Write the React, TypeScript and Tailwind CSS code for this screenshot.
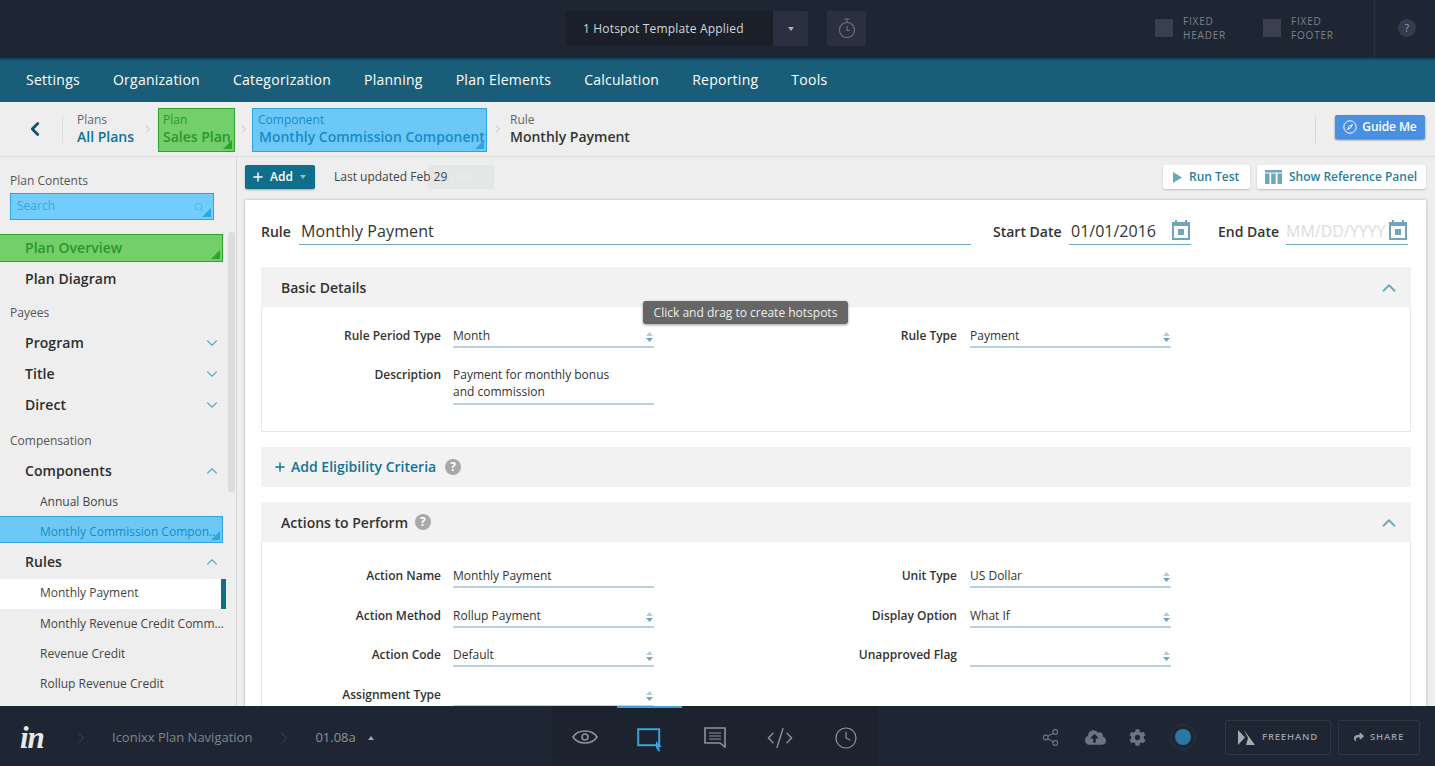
import React from "react";
import { ChevronDown, ChevronUp, ChevronLeft, ChevronRight, Plus, Search, Share2, CodeXml, Clock } from "lucide-react";
import { FaCloudUploadAlt, FaCog, FaShare } from "react-icons/fa";

const Corner = ({ color }: { color: string }) => (
  <svg className="absolute right-[2px] bottom-[2px]" width="9" height="9" viewBox="0 0 9 9"><path d="M9 0V9H0Z" fill={color} /></svg>
);

const Updown = () => (
  <svg className="absolute right-[1px] top-[5px]" width="7" height="10" viewBox="0 0 7 10"><path d="M3.5 0L7 4H0Z" fill="#b4ccd8" /><path d="M3.5 10L7 6H0Z" fill="#68a8c4" /></svg>
);

const Help = () => (
  <span className="inline-flex w-[16px] h-[16px] rounded-full bg-[#a8a8a8] text-white text-[12px] font-bold items-center justify-center leading-none">?</span>
);

const Calendar = () => (
  <svg width="18" height="20" viewBox="0 0 18 20" className="shrink-0"><path d="M3 0h2v2h8V0h2v2h3v18H0V2h3Z" fill="#6ea6bc" /><rect x="2" y="6" width="14" height="12" fill="#fff" /><rect x="6" y="9" width="6" height="6" fill="#6ea6bc" /></svg>
);

const Field = ({ label, value, select, second, h = "h-[21px]" }: { label: string; value: string; select?: boolean; second?: boolean; h?: string }) => (
  <div className="w-[516px] flex items-start shrink-0">
    <div className="w-[179px] text-right text-[12px] leading-[17px] font-semibold text-[#333]">{label}</div>
    <div className={`relative ${second ? "ml-[13px]" : "ml-[12px]"} w-[201px] ${h} border-b-2 border-[#b9d2de] text-[12px] leading-[17px] text-[#333] whitespace-pre-line`}>
      {value}
      {select && <Updown />}
    </div>
  </div>
);

const SecHead = ({ children }: { children: React.ReactNode }) => (
  <div className="h-[40px] bg-[#f2f2f2] flex items-center pl-[20px] pr-[11px] text-[14px] font-semibold text-[#333]">
    <div className="flex-1 flex items-center gap-[7px]">{children}</div>
    <ChevronUp size={22} strokeWidth={2} className="mt-[2px] text-[#6ea6bc]" />
  </div>
);

const SideTop = ({ label, chev }: { label: string; chev?: "up" | "down" }) => (
  <div className="h-[31px] flex items-center pl-[25px] pr-[15px] text-[14px] font-semibold text-[#2d2d2d] tracking-[0.05px]">
    <span className="flex-1">{label}</span>
    {chev === "down" && <ChevronDown size={18} strokeWidth={1.5} className="mt-[1px] text-[#6aa5bd]" />}
    {chev === "up" && <ChevronUp size={18} strokeWidth={1.5} className="mt-[1px] text-[#6aa5bd]" />}
  </div>
);

const SideSub = ({ label, pad = "pb-[1px]" }: { label: string; pad?: string }) => (
  <div className={`h-[30px] w-[225px] flex items-center pl-[40px] text-[12px] text-[#444] ${pad}`}>
    <span className="truncate">{label}</span>
  </div>
);

const SideHead = ({ label }: { label: string }) => (
  <div className="h-[24px] flex items-center pl-[10px] pt-[2px] text-[12px] text-[#555]">{label}</div>
);

const Crumb = ({ top, bottom, dark }: { top: string; bottom: string; dark?: boolean }) => (
  <div className="flex flex-col">
    <span className="text-[12px] leading-[16px] pt-[1px] text-[#666]">{top}</span>
    <span className={`text-[14px] leading-[18px] mb-[2px] font-semibold ${dark ? "text-[#333]" : "text-[#0f7396]"}`}>{bottom}</span>
  </div>
);

const Gt = () => <ChevronRight size={12} strokeWidth={1.5} className="text-[#aaa]" />;

export default function App() {
  return (
    <div className="w-[1435px] h-[766px] overflow-hidden flex flex-col bg-[#eeeeee] relative" style={{ fontFamily: '"Open Sans", sans-serif' }}>
      {/* top bar */}
      <header className="h-[60px] shrink-0 bg-[#1f2633] border-b-2 border-[#0f4a60] flex items-start relative">
        <div className="ml-[566px] mt-[11px] flex h-[35px]">
          <div className="w-[207px] bg-[#1a1f2a] rounded-l-[2px] flex items-center pl-[17px] text-[12px] text-[#d5d7da] tracking-[0.18px]">1 Hotspot Template Applied</div>
          <div className="w-[35px] bg-[#2a3040] rounded-r-[2px] flex items-center justify-center">
            <svg width="6" height="4" viewBox="0 0 6 4"><path d="M0 0H6L3 4Z" fill="#aab0b8" /></svg>
          </div>
        </div>
        <div className="ml-[19px] mt-[11px] w-[39px] h-[35px] bg-[#2a3040] rounded-[2px] flex items-center justify-center">
          <svg width="18" height="21" viewBox="0 0 18 21" fill="none" stroke="#6e7480" strokeWidth="1.1"><circle cx="9" cy="12" r="7.5" /><path d="M9 4.5V1.5M6.5 1h5M9 8v4.5h3" /></svg>
        </div>
        <div className="ml-[289px] mt-[14px] flex items-center gap-[10px]">
          <span className="w-[18px] h-[18px] bg-[#3a404d]" />
          <span className="text-[10px] leading-[14px] tracking-[0.8px] text-[#7c828c]">FIXED<br />HEADER</span>
        </div>
        <div className="ml-[37px] mt-[14px] flex items-center gap-[10px]">
          <span className="w-[18px] h-[18px] bg-[#3a404d]" />
          <span className="text-[10px] leading-[14px] tracking-[0.8px] text-[#7c828c]">FIXED<br />FOOTER</span>
        </div>
        <div className="ml-[40px] h-[58px] border-l border-[#2a3140] pl-[23px] pt-[19px]">
          <span className="w-[18px] h-[18px] rounded-full bg-[#333b4f] flex items-center justify-center text-[10px] text-[#9aa0aa]">?</span>
        </div>
      </header>

      {/* nav */}
      <nav className="h-[42px] shrink-0 bg-[#1a5d78] flex items-center pl-[26px] pb-[4px] gap-[33px] text-[14px] text-white tracking-[0.25px]">
        <span>Settings</span>
        <span>Organization</span>
        <span>Categorization</span>
        <span>Planning</span>
        <span>Plan Elements</span>
        <span>Calculation</span>
        <span>Reporting</span>
        <span>Tools</span>
      </nav>

      {/* breadcrumb */}
      <div className="h-[55px] shrink-0 border-b border-[#dcdcdc] flex items-center relative">
        <ChevronLeft size={22} strokeWidth={3} className="ml-[24px] text-[#0f4f6b]" />
        <span className="ml-[16px] w-px h-[27px] bg-[#dcdcdc]" />
        <div className="ml-[14px] w-[63px]"><Crumb top="Plans" bottom="All Plans" /></div>
        <div className="w-[16px] ml-[2px]"><Gt /></div>
        <div className="relative mt-[1px] w-[77px] h-[44px] bg-[#72cf6a] border border-[#2ba52a] pl-[4px] pt-[3px] overflow-hidden shrink-0 text-[#2c962a]">
          <div className="text-[12px] leading-[16px]">Plan</div>
          <div className="text-[14px] leading-[18px] font-semibold whitespace-nowrap">Sales Plan</div>
          <Corner color="#2ba52a" />
        </div>
        <div className="w-[17px] pl-[3px]"><Gt /></div>
        <div className="relative mt-[1px] w-[235px] h-[44px] bg-[#6cc9f7] border border-[#2fa5e0] pl-[5px] pt-[3px] overflow-hidden shrink-0 text-[#1a8ac6]">
          <div className="text-[12px] leading-[16px]">Component</div>
          <div className="text-[14px] leading-[18px] pl-[1px] font-semibold whitespace-nowrap">Monthly Commission Component</div>
          <Corner color="#2fa5e0" />
        </div>
        <div className="w-[23px] pl-[5px]"><Gt /></div>
        <Crumb top="Rule" bottom="Monthly Payment" dark />
        <span className="ml-auto w-px h-[27px] bg-[#d5d9d8]" />
        <button className="ml-[19px] mr-[10px] mb-[4px] w-[90px] h-[24px] bg-[#4a90e2] rounded-[2px] shadow-[0_1px_2px_rgba(0,0,0,0.5)] flex items-center justify-center gap-[5px] text-[12px] text-white font-semibold -tracking-[0.1px]">
          <svg width="14" height="14" viewBox="0 0 14 14" fill="none" stroke="#fff" strokeWidth="1"><circle cx="7" cy="7" r="6.2" /><path d="M9.5 4.5L6 6.5 4.5 9.5 8 7.5Z" /></svg>
          Guide Me
        </button>
      </div>

      {/* main */}
      <div className="flex-1 min-h-0 flex overflow-hidden">
        {/* sidebar */}
        <aside className="w-[237px] shrink-0 border-r border-[#d8d8d8] relative overflow-hidden">
          <div className="ml-[10px] mt-[16px] text-[12px] leading-[16px] text-[#555]">Plan Contents</div>
          <div className="relative ml-[10px] mt-[4px] w-[204px] h-[27px] bg-[#71cdfb] border border-[#2fa5e0] pl-[6px] pb-[2px] flex items-center text-[12px] text-[#3fa4da]">
            Search
            <Search size={10} className="absolute right-[9px] top-[8px] text-[#4eaee0]" />
            <Corner color="#2fa5e0" />
          </div>
          <div className="relative mt-[14px] w-[223px] h-[28px] bg-[#72cf6a] border border-[#2ba52a] border-l-0 pl-[25px] pb-[2px] flex items-center text-[14px] font-semibold tracking-[0.05px] text-[#2c962a]">
            Plan Overview
            <Corner color="#2ba52a" />
          </div>
          <div className="mt-[1px]"><SideTop label="Plan Diagram" /></div>
          <div className="mt-[6px]"><SideHead label="Payees" /></div>
          <div className="mt-[3px]"><SideTop label="Program" chev="down" /></div>
          <SideTop label="Title" chev="down" />
          <SideTop label="Direct" chev="down" />
          <div className="mt-[8px]"><SideHead label="Compensation" /></div>
          <div className="mt-[3px]"><SideTop label="Components" chev="up" /></div>
          <SideSub label="Annual Bonus" pad="pt-[1px]" />
          <div className="relative w-[223px] h-[27px] bg-[#6cc9f7] border border-[#2fa5e0] border-l-0 pl-[40px] pt-[5px] flex items-center text-[12px] text-[#1a8ac6] whitespace-nowrap overflow-hidden">
            Monthly Commission Compon...
            <Corner color="#2fa5e0" />
          </div>
          <div className="mt-[3px]"><SideTop label="Rules" chev="up" /></div>
          <div className="mt-[2px] w-[226px] h-[30px] bg-white border-r-[5px] border-[#0f6e8c] flex items-center pl-[40px] pb-[2px] text-[12px] text-[#444]">Monthly Payment</div>
          <SideSub label="Monthly Revenue Credit Commission" />
          <SideSub label="Revenue Credit" />
          <SideSub label="Rollup Revenue Credit" />
          <div className="absolute left-[228px] top-[75px] w-[7px] h-[260px] rounded-[4px] bg-[#dcdcdc]" />
        </aside>

        {/* content */}
        <main className="flex-1 min-w-0 pl-[8px] pr-[9px] pt-[8px]">
          <div className="h-[24px] flex items-center relative">
            <button className="w-[70px] h-[24px] bg-[#0f6e8c] rounded-[2px] shadow-[0_1px_2px_rgba(0,0,0,0.3)] flex items-center pl-[6px] gap-[5px] text-[12px] font-semibold text-white">
              <Plus size={14} strokeWidth={2.5} />
              Add
              <svg width="6" height="4" viewBox="0 0 6 4" className="ml-[2px]"><path d="M0 0H6L3 4Z" fill="#8cc0d2" /></svg>
            </button>
            <span className="relative ml-[19px] text-[12px] text-[#444] z-10">Last updated Feb 29</span>
            <span className="ml-[-19px] w-[66px] h-[24px] rounded-[2px] bg-[#e4e7e7] flex items-center justify-center text-[12px] text-[#ebeded]">Save</span>
            <button className="ml-auto w-[87px] h-[24px] bg-white rounded-[2px] shadow-[0_1px_2px_rgba(0,0,0,0.2)] flex items-center pl-[10px] gap-[7px] text-[12px] font-semibold text-[#2a7f9e]">
              <svg width="9" height="11" viewBox="0 0 9 11"><path d="M0 0L9 5.5 0 11Z" fill="#6ea6bc" /></svg>
              Run Test
            </button>
            <button className="ml-[7px] w-[169px] h-[24px] bg-white rounded-[2px] shadow-[0_1px_2px_rgba(0,0,0,0.2)] flex items-center pl-[8px] gap-[7px] text-[12px] font-semibold text-[#2a7f9e]">
              <svg width="17" height="14" viewBox="0 0 17 14" fill="#6ea6bc"><rect width="17" height="2.5" /><rect y="3.5" width="4.5" height="10.5" /><rect x="6.2" y="3.5" width="4.5" height="10.5" /><rect x="12.5" y="3.5" width="4.5" height="10.5" /></svg>
              Show Reference Panel
            </button>
          </div>

          <div className="mt-[11px] bg-white shadow-[0_0_3px_rgba(0,0,0,0.25)] pl-[16px] pr-[15px] pt-[16px] h-[520px]">
            {/* rule row */}
            <div className="h-[29px] flex items-start">
              <span className="pt-[7px] w-[30px] text-[14px] leading-[17px] font-semibold text-[#333]">Rule</span>
              <div className="ml-[8px] w-[672px] h-[29px] border-b border-[#6ea6bc] pl-[2px] text-[16px] leading-[30px] text-[#333] tracking-[0.1px]">Monthly Payment</div>
              <span className="ml-[22px] pt-[7px] w-[69px] whitespace-nowrap text-[14px] leading-[17px] font-semibold text-[#333]">Start Date</span>
              <div className="ml-[7px] w-[122px] h-[29px] border-b border-[#6ea6bc] pl-[2px] pr-[1px] flex items-start justify-between text-[16px] leading-[30px] text-[#333]">
                01/01/2016
                <span className="pt-[4px]"><Calendar /></span>
              </div>
              <span className="ml-[27px] pt-[7px] w-[61px] whitespace-nowrap text-[14px] leading-[17px] font-semibold text-[#333]">End Date</span>
              <div className="ml-[7px] w-[122px] h-[29px] border-b border-[#6ea6bc] flex items-start justify-between text-[16px] leading-[30px] text-[#dcdcdc] whitespace-nowrap overflow-hidden">
                MM/DD/YYYY
                <span className="pt-[4px] pr-[1px]"><Calendar /></span>
              </div>
            </div>

            {/* basic details */}
            <div className="mt-[22px]">
              <SecHead>Basic Details</SecHead>
              <div className="h-[125px] border border-t-0 border-[#e8e8e8] pt-[20px]">
                <div className="flex">
                  <Field label="Rule Period Type" value="Month" select />
                  <Field label="Rule Type" value="Payment" select second />
                </div>
                <div className="mt-[18px] flex">
                  <Field label="Description" value={"Payment for monthly bonus\nand commission"} h="h-[39px]" />
                </div>
              </div>
            </div>

            {/* eligibility */}
            <div className="mt-[15px] h-[40px] bg-[#f2f2f2] flex items-center pl-[12px] pb-[1px] gap-[4px] text-[14px] font-semibold text-[#0f7396]">
              <Plus size={14} strokeWidth={2.5} />
              <span>Add Eligibility Criteria</span>
              <span className="ml-[5px] flex"><Help /></span>
            </div>

            {/* actions */}
            <div className="mt-[15px]">
              <SecHead>Actions to Perform <Help /></SecHead>
              <div className="h-[200px] border border-t-0 border-[#e8e8e8] pt-[25px]">
                <div className="flex flex-col gap-[18.5px]">
                  <div className="flex"><Field label="Action Name" value="Monthly Payment" /><Field label="Unit Type" value="US Dollar" select second /></div>
                  <div className="flex"><Field label="Action Method" value="Rollup Payment" select /><Field label="Display Option" value="What If" select second /></div>
                  <div className="flex"><Field label="Action Code" value="Default" select /><Field label="Unapproved Flag" value="" select second /></div>
                  <div className="flex"><Field label="Assignment Type" value="" select /></div>
                </div>
              </div>
            </div>
          </div>
        </main>
      </div>

      {/* tooltip */}
      <div className="absolute left-[643px] top-[301px] h-[23px] w-[205px] rounded-[3px] bg-[#666] shadow-[0_1px_3px_rgba(0,0,0,0.4)] flex items-center justify-center text-[12px] text-[#eee]">Click and drag to create hotspots</div>

      {/* bottom */}
      <footer className="absolute left-0 right-0 bottom-0 h-[60px] bg-[#1f2633] flex items-center pt-[3px]">
        <span className="ml-[20px] w-[30px] text-[31px] leading-none font-bold italic text-[#e8e8e8] -tracking-[1px]" style={{ fontFamily: '"Liberation Serif", serif' }}>in</span>
        <ChevronRight size={18} strokeWidth={1} className="ml-[22px] text-[#4a505c]" />
        <span className="ml-[22px] text-[13px] text-[#7e8590]">Iconixx Plan Navigation</span>
        <ChevronRight size={20} strokeWidth={1} className="ml-[22px] text-[#4a505c]" />
        <span className="ml-[21px] text-[13px] text-[#8c929c]">01.08a</span>
        <svg width="6" height="4" viewBox="0 0 6 4" className="ml-[12px]"><path d="M3 0L6 4H0Z" fill="#a0a5ad" /></svg>

        <div className="absolute left-[552px] top-0 w-[326px] h-[60px] bg-[#1c222e]">
          <span className="absolute left-[65px] top-0 w-[65px] h-[2px] bg-[#3f9edd]" />
          <svg className="absolute left-[20px] top-[20px]" width="26" height="22" viewBox="0 0 26 22" fill="none" stroke="#8d929a" strokeWidth="1.6"><path d="M1 11C6 3 20 3 25 11 20 19 6 19 1 11Z" /><circle cx="13" cy="11" r="3" /></svg>
          <svg className="absolute left-[85px] top-[22px]" width="26" height="24" viewBox="0 0 26 24" fill="none"><rect x="1.2" y="1.2" width="21" height="16" stroke="#3f9edd" strokeWidth="2" /><path d="M19 13L25 19H22L23 23 21 23.5 20 20 19 21Z" fill="#3f9edd" /></svg>
          <svg className="absolute left-[152px] top-[21px]" width="22" height="21" viewBox="0 0 22 21" fill="none" stroke="#8d929a" strokeWidth="1.6"><path d="M1 1H21V20L16 16H1Z" /><path d="M5 6H17M5 9H17M5 12H17" strokeWidth="1.2" /></svg>
          <CodeXml size={28} strokeWidth={1.2} className="absolute left-[214px] top-[18px] text-[#8d929a]" />
          <Clock size={24} strokeWidth={1.2} className="absolute left-[282px] top-[20px] text-[#8d929a]" />
        </div>

        <div className="ml-auto flex items-center mr-[15px] -mt-[1px]">
          <Share2 size={19} strokeWidth={1.4} className="text-[#6c7482]" />
          <FaCloudUploadAlt size={21} className="ml-[25px] text-[#6c7482]" />
          <FaCog size={17} className="ml-[23px] text-[#6c7482]" />
          <span className="ml-[24px] w-[26px] h-[26px] rounded-full border border-[#2a3140] flex items-center justify-center">
            <span className="w-[16px] h-[16px] rounded-full bg-[#2a77a8]" />
          </span>
          <button className="ml-[29px] w-[106px] h-[35px] border border-[#2f3644] rounded-[2px] flex items-center justify-center gap-[7px] text-[9.5px] font-semibold tracking-[0.8px] text-[#9a9fa8]">
            <svg width="17" height="15" viewBox="0 0 17 15" fill="#a6abb2"><path d="M0 0L7 7.5 0 15ZM6 0L17 15H8L10 8Z" /></svg>
            FREEHAND
          </button>
          <button className="ml-[7px] w-[82px] h-[35px] border border-[#2f3644] rounded-[2px] flex items-center justify-center gap-[6px] text-[9.5px] font-semibold tracking-[0.8px] text-[#9a9fa8]">
            <FaShare size={10} />
            SHARE
          </button>
        </div>
      </footer>
    </div>
  );
}
